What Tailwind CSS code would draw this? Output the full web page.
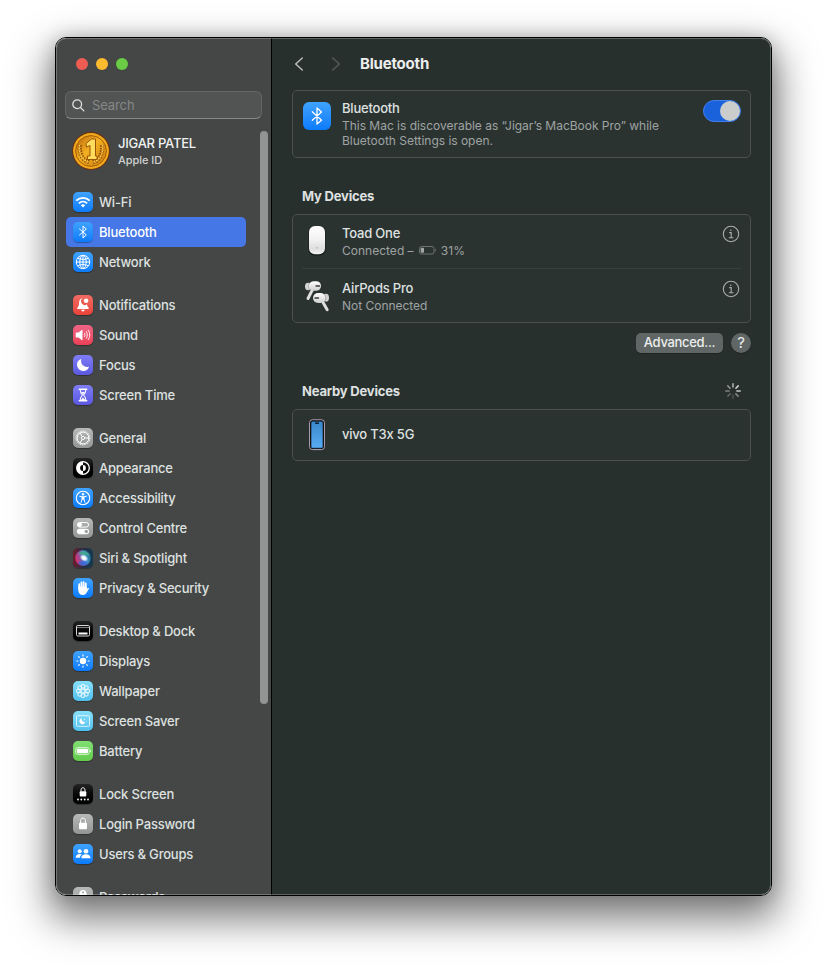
<!DOCTYPE html>
<html lang="en">
<head>
<meta charset="utf-8">
<title>Bluetooth</title>
<script src="https://cdn.jsdelivr.net/npm/@tailwindcss/browser@4"></script>
</head>
<body class="w-[827px] h-[969px] overflow-hidden bg-white pl-[55px] pt-[37px] font-[Inter,'Liberation_Sans',sans-serif] [font-feature-settings:'calt'_0] text-[13px] font-medium tracking-[-0.2px] text-[#dfe1e0]">
<div class="relative w-[717px] h-[859px] rounded-[11px] border border-black shadow-[0_18px_38px_6px_rgba(0,0,0,0.5),0_0_18px_0_rgba(0,0,0,0.18)]">
<div class="flex h-full w-full overflow-hidden rounded-[10px]">

  <!-- Sidebar -->
  <aside class="relative flex h-full w-[216px] shrink-0 flex-col overflow-hidden border-r border-black bg-[#444746]">
    <div class="flex shrink-0 gap-2 pl-5 pt-5">
      <span class="size-3 rounded-full bg-[#ee5c54]"></span>
      <span class="size-3 rounded-full bg-[#fcbb2e]"></span>
      <span class="size-3 rounded-full bg-[#6acb45]"></span>
    </div>
    <div class="mt-[21px] ml-[9px] flex h-7 w-[197px] shrink-0 items-center rounded-md border border-[#636665] border-b-[#868988] bg-[#515453] pl-[6px] text-[#858887]">
      <svg class="size-[13px]" viewBox="0 0 14 14" fill="none" stroke="#dfe1e0" stroke-width="1.400" stroke-linecap="round"><circle cx="5.600" cy="5.600" r="4.700"/><path d="M9.100 9.100 12.800 12.800"/></svg>
      <span class="ml-[7px] pt-[2px] font-normal tracking-[-0.1px]">Search</span>
    </div>
    <div class="mt-[13px] ml-4 flex h-[38px] shrink-0 items-center">
      <svg class="size-[38px]" viewBox="0 0 38 38">
        <defs><linearGradient id="gold" x1="0" y1="0" x2="1" y2="1"><stop offset="0" stop-color="#b8660a"/><stop offset=".45" stop-color="#f3b022"/><stop offset="1" stop-color="#c97a0c"/></linearGradient></defs>
        <circle cx="19" cy="19" r="18.900" fill="#70300e"/><circle cx="19" cy="19" r="17.900" fill="#f0ab1c"/><circle cx="19" cy="19" r="15.400" fill="url(#gold)" stroke="#a85c08" stroke-width="1"/>
        <path d="M8 13c-1 8 2 15 9 17M30 13c1 8-2 15-9 17" fill="none" stroke="#8d4a06" stroke-width="4.400" stroke-dasharray="1.500 1.300"/>
        <path d="M7.500 13c-1 8 2 15 9 17M30.500 13c1 8-2 15-9 17" fill="none" stroke="#ffd75a" stroke-width="1.600" stroke-dasharray="1.500 1.300"/>
        <path d="M14 11.500 19.500 7h4v17h1.500v3.500H15.500V24H18V13.500l-3.500 1.500z" fill="#ffdc5c" stroke="#9a5507" stroke-width="1"/>
      </svg>
      <div class="ml-2">
        <div class="text-[13px] leading-[17px] text-[#f0f1f1]"><span class="tracking-[-0.25px]">JIGAR PATEL</span></div>
        <div class="text-[11px] leading-[16px] text-[#d0d2d1]"><span class="tracking-[-0.05px]">Apple ID</span></div>
      </div>
    </div>

    <nav class="mt-[17px] ml-[10px] flex w-[180px] shrink-0 flex-col gap-[13px] [&_span]:pt-[2px]">
      <div>
        <div class="flex h-[30px] items-center gap-[6px] pl-[7px]">
          <svg class="size-5 rounded-[5px] bg-linear-to-b from-[#3ea2fd] to-[#0a7bfb] shadow-[0_1px_1px_rgba(0,0,0,.3)]" viewBox="0 0 20 20" fill="none" stroke="#fff" stroke-width="1.800"><path d="M3.300 8.700c3.800-3.800 9.600-3.800 13.400 0M5.900 11.300c2.400-2.300 5.800-2.300 8.200 0"/><path d="M7.800 13.200c1.300-1.200 3.100-1.200 4.400 0L10 15.500z" fill="#fff" stroke="none"/></svg>
          <span>Wi-Fi</span></div>
        <div class="flex h-[30px] items-center gap-[6px] rounded-[5px] bg-[#4577e6] pl-[7px] text-white">
          <svg class="size-5 rounded-[5px] bg-linear-to-b from-[#3ea2fd] to-[#0a7bfb] shadow-[0_1px_1px_rgba(0,0,0,.3)]" viewBox="0 0 20 20" fill="none" stroke="#fff" stroke-width="1" stroke-linejoin="round" stroke-linecap="round"><path d="M6.500 7 13.300 12.900 10 16V4l3.300 3.100L6.500 13"/></svg>
          <span>Bluetooth</span></div>
        <div class="flex h-[30px] items-center gap-[6px] pl-[7px]">
          <svg class="size-5 rounded-[5px] bg-linear-to-b from-[#3ea2fd] to-[#0a7bfb] shadow-[0_1px_1px_rgba(0,0,0,.3)]" viewBox="0 0 20 20" fill="none" stroke="#fff" stroke-width="1"><circle cx="10" cy="10" r="6.700"/><ellipse cx="10" cy="10" rx="3.200" ry="6.700"/><path d="M10 3.300v13.400M3.300 10h13.400M4.700 6.200c3 1.700 7.600 1.700 10.600 0M4.700 13.800c3-1.700 7.600-1.700 10.600 0"/></svg>
          <span>Network</span></div>
      </div>
      <div>
        <div class="flex h-[30px] items-center gap-[6px] pl-[7px]">
          <svg class="size-5 rounded-[5px] bg-linear-to-b from-[#ef6b63] to-[#ea4238] shadow-[0_1px_1px_rgba(0,0,0,.3)]" viewBox="0 0 20 20" fill="#fff"><path d="M9.600 3.300c-2.600.3-3.500 2.300-3.500 4.500 0 2.800-.6 3.800-1.800 5-.4.500-.2 1.100.4 1.100h10.600c.6 0 .8-.6.400-1.100-1-1-1.500-1.900-1.700-3.500A3.200 3.200 0 0 1 9.600 3.300zM8.200 14.800h3.600c-.2 1-.9 1.600-1.800 1.600s-1.600-.6-1.800-1.600z"/><circle cx="13.100" cy="5.700" r="2.300"/></svg>
          <span>Notifications</span></div>
        <div class="flex h-[30px] items-center gap-[6px] pl-[7px]">
          <svg class="size-5 rounded-[5px] bg-linear-to-b from-[#ef6486] to-[#ea4055] shadow-[0_1px_1px_rgba(0,0,0,.3)]" viewBox="0 0 20 20" fill="none" stroke="#fff" stroke-linecap="round"><path d="M2.700 8.200c0-.5.300-.8.800-.8h2L8.700 4.900c.4-.3.800-.1.800.4v9.400c0 .5-.4.700-.8.400l-3.200-2.500h-2c-.5 0-.8-.3-.8-.8z" fill="#fff" stroke="none"/><path d="M11.500 8.200c.7 1.100.7 2.500 0 3.600M13.400 6.700c1.300 2 1.300 4.600 0 6.600M15.300 5.300c2 2.900 2 6.500 0 9.400" stroke-width=".9"/></svg>
          <span>Sound</span></div>
        <div class="flex h-[30px] items-center gap-[6px] pl-[7px]">
          <svg class="size-5 rounded-[5px] bg-linear-to-b from-[#7f7df6] to-[#5b58e0] shadow-[0_1px_1px_rgba(0,0,0,.3)]" viewBox="0 0 20 20" fill="#fff"><path d="M7.800 4.100c.3-.1.500.1.400.4-.9 3.900 2 7.400 6 7.400.6 0 1-.1 1.400-.2.300-.1.500.1.400.4A6.100 6.100 0 0 1 10.300 16 6.200 6.200 0 0 1 4 9.800c0-2.600 1.500-4.800 3.800-5.700z"/></svg>
          <span>Focus</span></div>
        <div class="flex h-[30px] items-center gap-[6px] pl-[7px]">
          <svg class="size-5 rounded-[5px] bg-linear-to-b from-[#7f7df6] to-[#5b58e0] shadow-[0_1px_1px_rgba(0,0,0,.3)]" viewBox="0 0 20 20" fill="none" stroke="#fff" stroke-width="1.100" stroke-linecap="round"><path d="M6.300 4.300h7.400M6.300 15.700h7.400" stroke-width="1.500"/><path d="M7.200 4.500c0 2.800.6 3.700 2.200 5.500-1.600 1.800-2.200 2.700-2.200 5.500M12.800 4.500c0 2.800-.6 3.700-2.200 5.500 1.600 1.800 2.200 2.700 2.200 5.500"/><path d="M8.300 7h3.400L10 9.500zM7.700 15.200l2.300-2.700 2.300 2.700z" fill="#fff" stroke="none"/></svg>
          <span>Screen Time</span></div>
      </div>
      <div>
        <div class="flex h-[30px] items-center gap-[6px] pl-[7px]">
          <svg class="size-5 rounded-[5px] bg-linear-to-b from-[#b7b9b9] to-[#939595] shadow-[0_1px_1px_rgba(0,0,0,.3)]" viewBox="0 0 20 20" fill="none" stroke="#fff"><circle cx="10" cy="10" r="6.900" stroke-width="1" stroke-dasharray="1.100 .7"/><circle cx="10" cy="10" r="5.900" stroke-width="1"/><circle cx="10" cy="10" r="1.600" stroke-width=".9"/><path d="M11.600 10h4.300M9.200 8.600 7 4.900M9.200 11.400 7 15.100" stroke-width="1"/></svg>
          <span>General</span></div>
        <div class="flex h-[30px] items-center gap-[6px] pl-[7px]">
          <svg class="size-5 rounded-[5px] bg-linear-to-b from-[#252525] to-black shadow-[0_1px_1px_rgba(0,0,0,.3)]" viewBox="0 0 20 20"><circle cx="10" cy="10" r="6.300" fill="none" stroke="#fff" stroke-width="1.300"/><path d="M10 3.700a6.300 6.300 0 0 0 0 12.600v-3.400a2.900 2.900 0 0 1 0-5.800z" fill="#fff"/><path d="M10 7.100a2.900 2.900 0 0 1 0 5.800z" fill="#fff"/></svg>
          <span>Appearance</span></div>
        <div class="flex h-[30px] items-center gap-[6px] pl-[7px]">
          <svg class="size-5 rounded-[5px] bg-linear-to-b from-[#3ea2fd] to-[#0a7bfb] shadow-[0_1px_1px_rgba(0,0,0,.3)]" viewBox="0 0 20 20" fill="none" stroke="#fff" stroke-linecap="round"><circle cx="10" cy="10" r="6.700" stroke-width="1.100"/><circle cx="10" cy="6.300" r="1.200" fill="#fff" stroke="none"/><path d="M6.700 8.300 9 8.800v2.500l-.9 3M13.300 8.300 11 8.800v2.500l.9 3" stroke-width="1"/><path d="M9 8.300h2v3.500H9z" fill="#fff" stroke="none"/></svg>
          <span>Accessibility</span></div>
        <div class="flex h-[30px] items-center gap-[6px] pl-[7px]">
          <svg class="size-5 rounded-[5px] bg-linear-to-b from-[#b7b9b9] to-[#939595] shadow-[0_1px_1px_rgba(0,0,0,.3)]" viewBox="0 0 20 20"><rect x="4.400" y="4.500" width="11.200" height="4.600" rx="2.300" fill="none" stroke="#fff"/><circle cx="6.700" cy="6.800" r="2.200" fill="#fff"/><rect x="3.900" y="10.700" width="12.200" height="5.600" rx="2.800" fill="#fff"/><circle cx="13.300" cy="13.500" r="1.700" fill="#a0a2a2"/></svg>
          <span>Control Centre</span></div>
        <div class="flex h-[30px] items-center gap-[6px] pl-[7px]">
          <svg class="size-5 rounded-[5px] shadow-[0_1px_1px_rgba(0,0,0,.3)]" viewBox="0 0 20 20"><defs><linearGradient id="siribg"><stop offset="0" stop-color="#6c1c2c"/><stop offset=".5" stop-color="#2c2e46"/><stop offset="1" stop-color="#113a50"/></linearGradient><linearGradient id="orb" x1="0" y1=".7" x2="1" y2=".4"><stop offset="0" stop-color="#e02a60"/><stop offset=".4" stop-color="#8a58a8"/><stop offset=".65" stop-color="#4b9bd0"/><stop offset="1" stop-color="#1f6a8a"/></linearGradient><radialGradient id="glow"><stop offset="0" stop-color="#fff"/><stop offset=".45" stop-color="#f0f8ff" stop-opacity=".95"/><stop offset="1" stop-color="#8ac8f0" stop-opacity="0"/></radialGradient></defs><rect width="20" height="20" fill="url(#siribg)"/><circle cx="10" cy="10" r="7.800" fill="url(#orb)"/><path d="M5.500 5.500C9 1.500 15 2.800 17 7.800c-3-1.600-8 .7-11.500-2.300z" fill="#3fa88c" opacity=".85"/><path d="M5 14.500c4-1 6-3 6-5l4 6c-3 3-8 3-10-1z" fill="#3668d8" opacity=".8"/><ellipse cx="11" cy="10" rx="5" ry="3.600" transform="rotate(35 11 10)" fill="url(#glow)"/></svg>
          <span>Siri &amp; Spotlight</span></div>
        <div class="flex h-[30px] items-center gap-[6px] pl-[7px]">
          <svg class="size-5 rounded-[5px] bg-linear-to-b from-[#3ea2fd] to-[#0a7bfb] shadow-[0_1px_1px_rgba(0,0,0,.3)]" viewBox="0 0 20 20" fill="none" stroke="#fff" stroke-linecap="round"><path d="M6.200 6.200v5M8.400 4.500v6M10.600 4.100v6M12.800 5.400v6" stroke-width="1.800"/><path d="M5.300 8.500h8.400V11l1.100-.9c.8-.5 1.500.2 1 .9l-2.400 4c-.7 1.200-1.700 1.900-3.300 1.900-3 0-4.800-2-4.800-5z" fill="#fff" stroke="none"/></svg>
          <span>Privacy &amp; Security</span></div>
      </div>
      <div>
        <div class="flex h-[30px] items-center gap-[6px] pl-[7px]">
          <svg class="size-5 rounded-[5px] bg-linear-to-b from-[#252525] to-black shadow-[0_1px_1px_rgba(0,0,0,.3)]" viewBox="0 0 20 20" fill="none" stroke="#d8d8d8"><rect x="3.500" y="4.500" width="13" height="10.500" rx="1.300"/><path d="M4 6.500h12" stroke-width=".7" opacity=".8"/><path d="M5.500 12.500h9" stroke="#fff" stroke-width="1.800"/></svg>
          <span>Desktop &amp; Dock</span></div>
        <div class="flex h-[30px] items-center gap-[6px] pl-[7px]">
          <svg class="size-5 rounded-[5px] bg-linear-to-b from-[#3ea2fd] to-[#0a7bfb] shadow-[0_1px_1px_rgba(0,0,0,.3)]" viewBox="0 0 20 20" stroke="#fff" stroke-width="1.200" stroke-linecap="round"><circle cx="10" cy="10" r="3.200" fill="#fff" stroke="none"/><path d="M10 3.900v1M10 15.100v1M3.900 10h1M15.100 10h1M5.700 5.700l.6.600M13.700 13.700l.6.600M14.300 5.700l-.6.600M6.300 13.700l-.6.600"/></svg>
          <span>Displays</span></div>
        <div class="flex h-[30px] items-center gap-[6px] pl-[7px]">
          <svg class="size-5 rounded-[5px] bg-linear-to-b from-[#85e0fb] to-[#50bfec] shadow-[0_1px_1px_rgba(0,0,0,.3)]" viewBox="0 0 20 20" fill="none" stroke="#fff" stroke-width=".9"><circle cx="10" cy="10" r="2"/><circle cx="10" cy="5.300" r="1.900"/><circle cx="13.300" cy="6.700" r="1.900"/><circle cx="14.700" cy="10" r="1.900"/><circle cx="13.300" cy="13.300" r="1.900"/><circle cx="10" cy="14.700" r="1.900"/><circle cx="6.700" cy="13.300" r="1.900"/><circle cx="5.300" cy="10" r="1.900"/><circle cx="6.700" cy="6.700" r="1.900"/></svg>
          <span>Wallpaper</span></div>
        <div class="flex h-[30px] items-center gap-[6px] pl-[7px]">
          <svg class="size-5 rounded-[5px] bg-linear-to-b from-[#85e0fb] to-[#50bfec] shadow-[0_1px_1px_rgba(0,0,0,.3)]" viewBox="0 0 20 20" fill="none" stroke="#fff"><rect x="3.500" y="4.700" width="13" height="10.600" rx=".8" stroke-width="1" opacity=".75"/><path d="M8.600 7.300c-.2 2.300 1 3.800 3.600 3.900a3 3 0 1 1-3.600-3.900z" fill="#fff" stroke="none"/><circle cx="11.500" cy="8.600" r=".6" fill="#fff" stroke="none"/><circle cx="13.300" cy="10.500" r=".4" fill="#fff" stroke="none"/></svg>
          <span>Screen Saver</span></div>
        <div class="flex h-[30px] items-center gap-[6px] pl-[7px]">
          <svg class="size-5 rounded-[5px] bg-linear-to-b from-[#80e072] to-[#64cb4c] shadow-[0_1px_1px_rgba(0,0,0,.3)]" viewBox="0 0 20 20"><rect x="2.600" y="6.500" width="13.600" height="7" rx="2" fill="none" stroke="#fff" stroke-width=".8" opacity=".8"/><rect x="3.800" y="7.700" width="11.200" height="4.600" rx="1" fill="#fff"/><path d="M17 8.700c1.100.4 1.100 2.200 0 2.600z" fill="#fff"/></svg>
          <span>Battery</span></div>
      </div>
      <div>
        <div class="flex h-[30px] items-center gap-[6px] pl-[7px]">
          <svg class="size-5 rounded-[5px] bg-linear-to-b from-[#252525] to-black shadow-[0_1px_1px_rgba(0,0,0,.3)]" viewBox="0 0 20 20" fill="#fff"><rect x="6.700" y="7.300" width="6.600" height="5.200" rx=".9"/><path d="M8 7.500V5.800c0-2.700 4-2.700 4 0v1.700" fill="none" stroke="#fff"/><circle cx="5" cy="15.500" r=".9"/><circle cx="8.300" cy="15.500" r=".9"/><circle cx="11.700" cy="15.500" r=".9"/><circle cx="15" cy="15.500" r=".9"/></svg>
          <span>Lock Screen</span></div>
        <div class="flex h-[30px] items-center gap-[6px] pl-[7px]">
          <svg class="size-5 rounded-[5px] bg-linear-to-b from-[#b7b9b9] to-[#939595] shadow-[0_1px_1px_rgba(0,0,0,.3)]" viewBox="0 0 20 20" fill="#fff"><rect x="6" y="8.800" width="8" height="6.400" rx="1"/><path d="M7.600 9V6.500c0-3.200 4.800-3.200 4.800 0V9" fill="none" stroke="#fff"/></svg>
          <span>Login Password</span></div>
        <div class="flex h-[30px] items-center gap-[6px] pl-[7px]">
          <svg class="size-5 rounded-[5px] bg-linear-to-b from-[#3ea2fd] to-[#0a7bfb] shadow-[0_1px_1px_rgba(0,0,0,.3)]" viewBox="0 0 20 20" fill="#fff"><circle cx="6.700" cy="7.300" r="2"/><path d="M2.700 13.800c0-2.400 1.600-3.800 4-3.800.8 0 1.500.2 2.100.5-1.200.9-1.800 2-1.900 3.300z"/><circle cx="13" cy="7.200" r="2.300"/><path d="M8.300 14.200c0-2.500 1.900-4 4.600-4s4.600 1.500 4.600 4z"/></svg>
          <span>Users &amp; Groups</span></div>
      </div>
      <div>
        <div class="flex h-[30px] items-center gap-[6px] pl-[7px]">
          <svg class="size-5 rounded-[5px] bg-linear-to-b from-[#b7b9b9] to-[#939595]" viewBox="0 0 20 20" fill="#fff"><path fill-rule="evenodd" d="M10 3a3.700 3.700 0 0 1 1.400 7.100V16h-2.800v-5.900A3.700 3.700 0 0 1 10 3zm0 1.300a1.100 1.100 0 1 0 0 2.200 1.100 1.100 0 0 0 0-2.200z"/></svg>
          <span>Passwords</span></div>
      </div>
    </nav>
    <div class="absolute left-[204px] top-[93px] h-[573px] w-2 rounded-full bg-[#919493]"></div>
  </aside>

  <!-- Detail pane -->
  <main class="flex h-full flex-1 flex-col bg-[#28302e] pl-5 pr-5">
    <header class="flex h-[52px] shrink-0 items-center">
      <svg class="ml-[2px] h-[14px] w-[10px]" viewBox="0 0 10 14" fill="none" stroke="#b9bcbb" stroke-width="1.500" stroke-linecap="round" stroke-linejoin="round"><path d="M8.300 1 1.700 7l6.600 6"/></svg>
      <svg class="ml-[27px] h-[14px] w-[10px]" viewBox="0 0 10 14" fill="none" stroke="#545b59" stroke-width="1.500" stroke-linecap="round" stroke-linejoin="round"><path d="M1.700 1 8.300 7l-6.600 6"/></svg>
      <h1 class="ml-[19px] text-[15px] font-bold text-[#eceeed]"><span class="tracking-[-0.2px]">Bluetooth</span></h1>
    </header>

    <section class="flex h-[68px] w-[459px] shrink-0 rounded-[5px] border border-[#4a514f] bg-[#2b3331] pl-[10px] pr-[9px]">
      <svg class="mt-[11px] size-7 shrink-0 rounded-[6px] bg-linear-to-b from-[#3ea2fd] to-[#0a7bfb]" viewBox="0 0 28 28" fill="none" stroke="#fff" stroke-width="1.300" stroke-linejoin="round" stroke-linecap="round"><path d="M9.300 9.800 18.500 18.300 14 22V6l4.500 3.900L9.300 18.200"/></svg>
      <div class="ml-[11px] flex-1 pt-[9px]">
        <div class="leading-[17px]"><span>Bluetooth</span></div>
        <div class="pt-px text-[12px] leading-[15px] font-normal tracking-[-0.02px] text-[#9fa3a2]"><span class="whitespace-nowrap">This Mac is discoverable as “Jigar’s MacBook Pro” while</span><br><span>Bluetooth Settings is open.</span></div>
      </div>
      <div class="mt-[9px] flex h-[22px] w-[38px] justify-end rounded-full border border-[#4380e8] bg-[#1a62dc]"><span class="size-5 rounded-full bg-[#cbcdcc]"></span></div>
    </section>

    <h2 class="mt-[30px] pl-[10px] text-[13px] leading-4 font-bold"><span>My Devices</span></h2>
    <section class="mt-[10px] h-[109px] w-[459px] shrink-0 rounded-[5px] border border-[#4a514f] bg-[#2b3331] px-[9px]">
      <div class="flex h-[54px] border-b border-[#373f3d]">
        <svg class="ml-[5px] mt-[10px] h-8 w-5 shrink-0" viewBox="0 0 20 32"><defs><linearGradient id="mouse" x1="0" y1="0" x2="0" y2="1"><stop offset="0" stop-color="#fff"/><stop offset=".45" stop-color="#f3f3f3"/><stop offset=".8" stop-color="#dedede"/><stop offset="1" stop-color="#f3f3f3"/></linearGradient></defs><rect x="1.500" y="1.500" width="17" height="29" rx="6" fill="#151a19"/><rect x="2" y="1" width="16" height="28.300" rx="6" fill="url(#mouse)"/><circle cx="10" cy="22.700" r="1" fill="#c5c5c5"/></svg>
        <div class="ml-[15px] flex-1 pt-[10px]">
          <div class="leading-[17px]"><span>Toad One</span></div>
          <div class="flex items-center text-[12px] leading-[17px] font-normal tracking-[0.01px] text-[#9fa3a2]"><span>Connected –</span>
            <svg class="ml-[5px] h-[9px] w-[18px]" viewBox="0 0 18 9"><rect x=".5" y=".5" width="14.500" height="7.500" rx="2" fill="none" stroke="#747a78" stroke-width=".9"/><rect x="1.700" y="1.700" width="3.300" height="5.100" rx=".8" fill="#a2a6a5"/><path d="M16.200 2.800c1 .3 1 2.600 0 2.900z" fill="#747a78"/></svg>
            <span class="ml-[4px] tracking-[0.2px]">31%</span></div>
        </div>
        <svg class="mt-[10px] mr-px size-[18px]" viewBox="0 0 18 18" fill="none" stroke="#a9adac" stroke-width="1.100"><circle cx="9" cy="9" r="7.700"/><circle cx="8.800" cy="5.200" r=".8" fill="#a9adac" stroke="none"/><path d="M7.200 7.600h2v5M6.800 12.800h4.600"/></svg>
      </div>
      <div class="flex h-[53px]">
        <svg class="ml-[2px] mt-[11px] h-8 w-[26px] shrink-0" viewBox="0 0 26 32"><defs><linearGradient id="pod" x1="0" y1="0" x2="0" y2="1"><stop offset="0" stop-color="#fff"/><stop offset="1" stop-color="#cfcfcf"/></linearGradient></defs><g stroke-linecap="round"><path d="M8 10.500 4 18.500" stroke="#dedede" stroke-width="3"/><ellipse cx="4" cy="6.500" rx="3" ry="3.700" fill="#d5d5d5"/><rect x="5" y="1.200" width="12" height="9.600" rx="4.800" fill="url(#pod)"/><path d="M12 6h3.500" stroke="#3a3a3a" stroke-width="1.300"/><path d="M5 3.500c-.9 1.600-.9 4.300 0 6" fill="none" stroke="#aaa" stroke-width=".7"/><path d="m18.500 21.500 4.700 8.300" stroke="#dedede" stroke-width="3"/><ellipse cx="22" cy="17.700" rx="3" ry="3.900" fill="#d5d5d5"/><rect x="9" y="13" width="12.500" height="10" rx="5" fill="url(#pod)"/><path d="M11 18h3.500" stroke="#3a3a3a" stroke-width="1.300"/><path d="M21.200 15c.9 1.600.9 4.300 0 6" fill="none" stroke="#999" stroke-width=".8"/></g></svg>
        <div class="ml-[12px] flex-1 pt-[11px]">
          <div class="leading-[17px]"><span>AirPods Pro</span></div>
          <div class="text-[12px] leading-[17px] font-normal tracking-[-0.02px] text-[#9fa3a2]"><span>Not Connected</span></div>
        </div>
        <svg class="mt-[11px] mr-px size-[18px]" viewBox="0 0 18 18" fill="none" stroke="#a9adac" stroke-width="1.100"><circle cx="9" cy="9" r="7.700"/><circle cx="8.800" cy="5.200" r=".8" fill="#a9adac" stroke="none"/><path d="M7.200 7.600h2v5M6.800 12.800h4.600"/></svg>
      </div>
    </section>

    <div class="mt-[10px] flex w-[459px] justify-end gap-2">
      <button class="flex h-5 w-[87px] justify-center rounded-[5px] bg-[#606665] text-[13px] leading-[19px] tracking-[-0.32px] text-[#eceeed] shadow-[0_1px_1px_rgba(0,0,0,.25)]"><span>Advanced...</span></button>
      <button class="size-5 rounded-full bg-[#606665] text-[15px] leading-5 font-normal text-[#eceeed] shadow-[0_1px_1px_rgba(0,0,0,.25)]">?</button>
    </div>

    <div class="mt-[30px] flex h-4 w-[459px] items-center justify-between pl-[10px] pr-[10px]">
      <h2 class="text-[13px] leading-4 font-bold"><span>Nearby Devices</span></h2>
      <svg class="size-4" viewBox="0 0 16 16" stroke-width="1.500" stroke-linecap="round"><path d="M8 .8v3.300" stroke="#b4b7b6"/><path d="m13.200 2.900-2.300 2.300" stroke="#d3d5d4"/><path d="M15.200 8h-3.300" stroke="#c6c8c7"/><path d="m13.200 13.200-2.300-2.300" stroke="#858a88"/><path d="M8 15.200v-3.300" stroke="#4b5250"/><path d="m2.800 13.200 2.300-2.300" stroke="#606765"/><path d="M.8 8h3.300" stroke="#7a807e"/><path d="m2.800 2.900 2.300 2.300" stroke="#929695"/></svg>
    </div>
    <section class="mt-[10px] flex h-[52px] w-[459px] shrink-0 items-center rounded-[5px] border border-[#4a514f] bg-[#2b3331] pl-4">
      <svg class="h-8 w-4 shrink-0" viewBox="0 0 16 32"><defs><linearGradient id="screen" x1="0" y1="0" x2="0" y2="1"><stop offset="0" stop-color="#3987c9"/><stop offset="1" stop-color="#58adf3"/></linearGradient></defs><rect x=".6" y=".8" width="14.800" height="29.800" rx="2.800" fill="#090b0d" stroke="#b8a7ba" stroke-width="1"/><rect x="2" y="2.200" width="12" height="27" rx="1.500" fill="url(#screen)" stroke="#05080a" stroke-width=".6"/><rect x="6" y="3.400" width="4" height="1.300" rx=".6" fill="#000"/></svg>
      <span class="ml-[17px]">vivo T3x 5G</span>
    </section>
  </main>
</div>
<div class="pointer-events-none absolute inset-0 rounded-[10px] border border-white/25"></div>
</div>
</body>
</html>
